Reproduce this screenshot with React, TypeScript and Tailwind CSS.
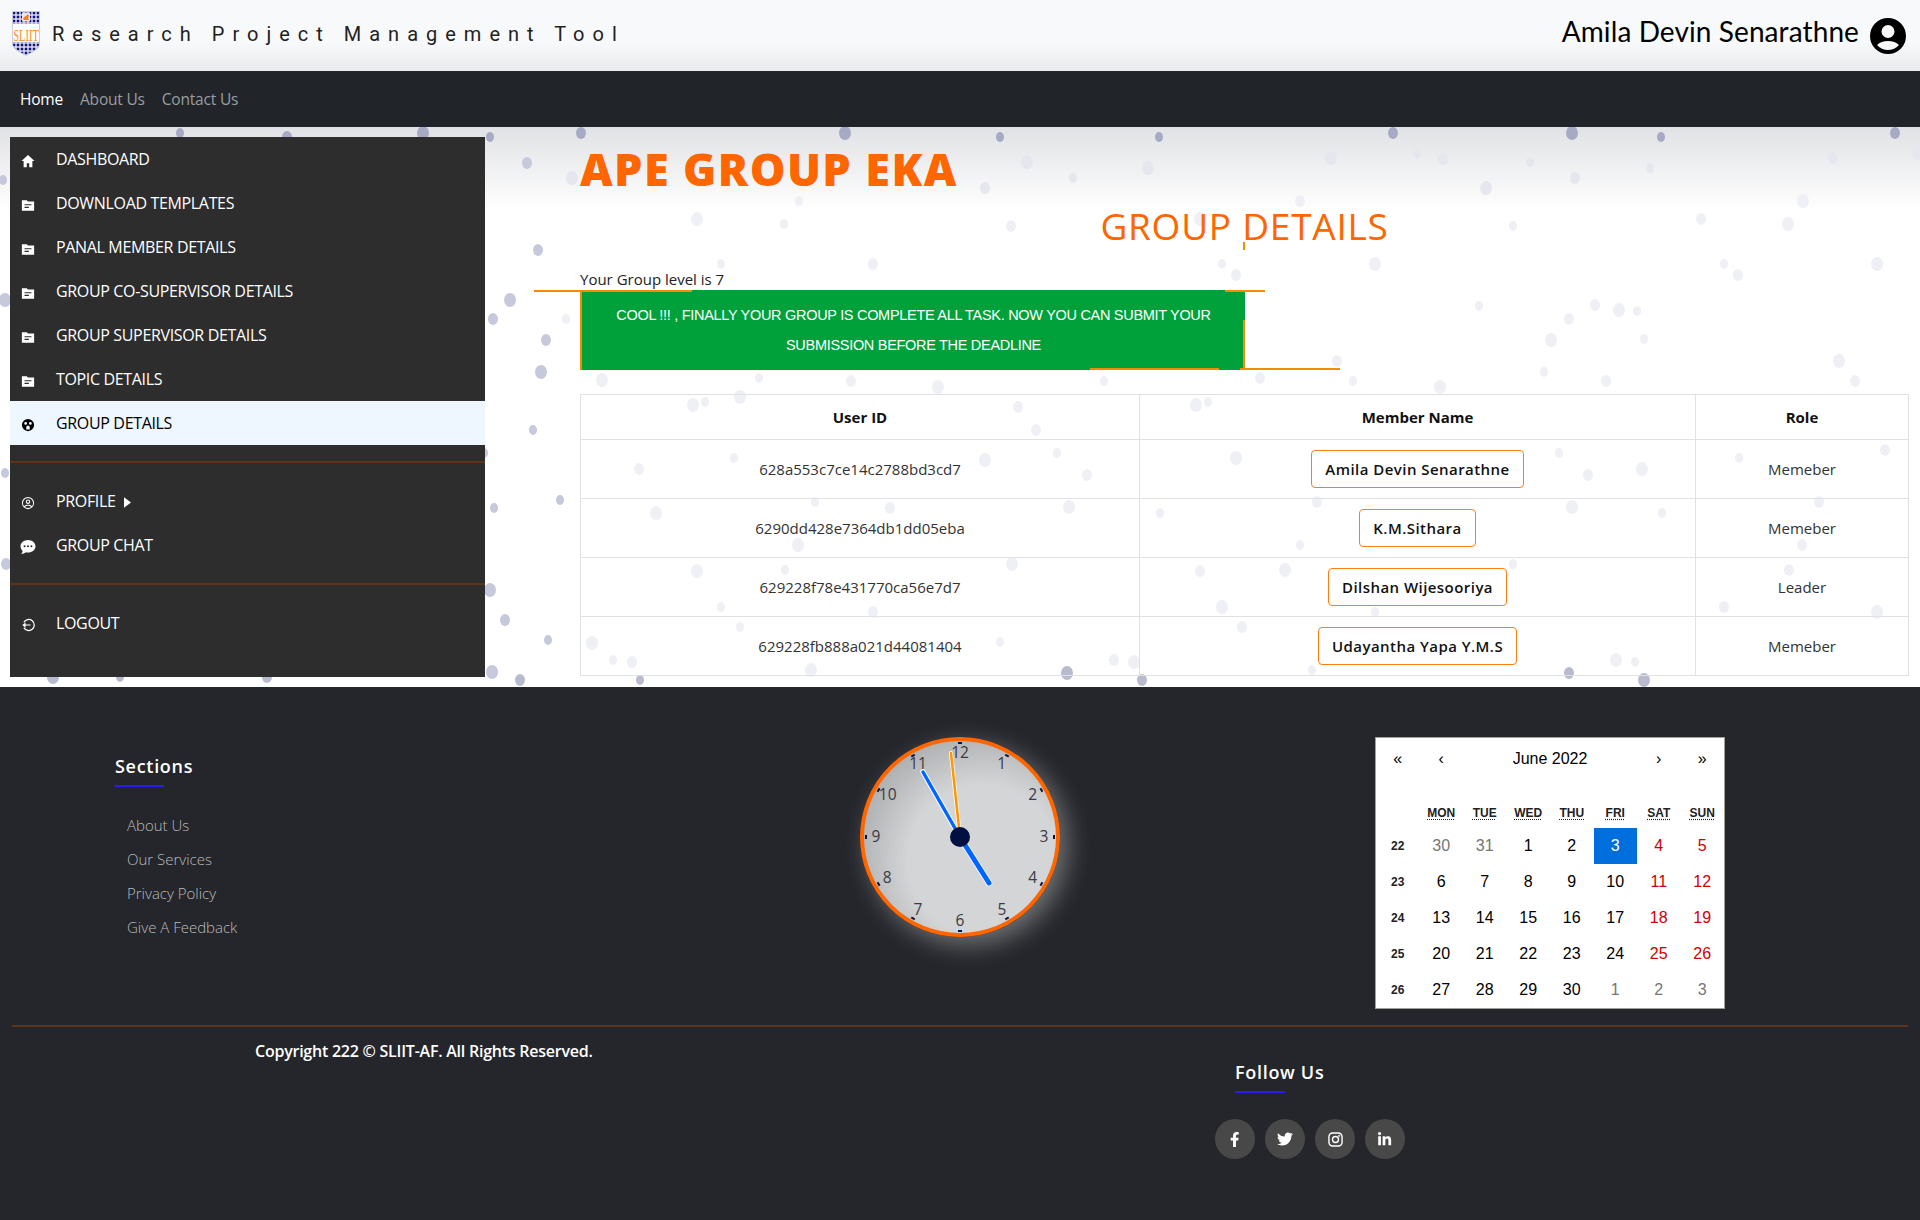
const NAV = [
  { label: "DASHBOARD", icon: "home" },
  { label: "DOWNLOAD TEMPLATES", icon: "file" },
  { label: "PANAL MEMBER DETAILS", icon: "file" },
  { label: "GROUP CO-SUPERVISOR DETAILS", icon: "file" },
  { label: "GROUP SUPERVISOR DETAILS", icon: "file" },
  { label: "TOPIC DETAILS", icon: "file" },
]

const MEMBERS = [
  { id: "628a553c7ce14c2788bd3cd7", name: "Amila Devin Senarathne", role: "Memeber" },
  { id: "6290dd428e7364db1dd05eba", name: "K.M.Sithara", role: "Memeber" },
  { id: "629228f78e431770ca56e7d7", name: "Dilshan Wijesooriya", role: "Leader" },
  { id: "629228fb888a021d44081404", name: "Udayantha Yapa Y.M.S", role: "Memeber" },
]

// week no, then days: [label, kind]  m = muted, w = weekend, s = selected
const WEEKS: [number, [number, string][]][] = [
  [22, [[30, "m"], [31, "m"], [1, ""], [2, ""], [3, "s"], [4, "w"], [5, "w"]]],
  [23, [[6, ""], [7, ""], [8, ""], [9, ""], [10, ""], [11, "w"], [12, "w"]]],
  [24, [[13, ""], [14, ""], [15, ""], [16, ""], [17, ""], [18, "w"], [19, "w"]]],
  [25, [[20, ""], [21, ""], [22, ""], [23, ""], [24, ""], [25, "w"], [26, "w"]]],
  [26, [[27, ""], [28, ""], [29, ""], [30, ""], [1, "m"], [2, "m"], [3, "m"]]],
]

// page coordinates of the rain drops in the wallpaper
const DROPS = [
  [1159, 137], [1393, 133], [1572, 133], [1661, 137], [1895, 133], [1918, 153], [1417, 154], [1443, 159], [1331, 158], [1530, 162],
  [1575, 178], [1486, 188], [1650, 168], [1833, 158], [1803, 201], [1513, 226], [1701, 219], [1788, 224], [1222, 264], [1236, 275],
  [1375, 264], [1724, 264], [1738, 275], [1877, 264], [1479, 306], [1595, 305], [1619, 310], [1637, 311], [1569, 319], [1551, 340],
  [1644, 339], [1337, 361], [1839, 361], [1544, 372], [1855, 381], [1440, 387], [1353, 381], [1606, 381], [1027, 162], [1073, 178],
  [985, 188], [1148, 168], [799, 201], [1300, 201], [697, 219], [784, 224], [1011, 226], [1200, 219], [721, 264], [873, 264],
  [602, 380], [759, 378], [851, 381], [938, 387], [1104, 381], [1260, 378], [693, 405], [705, 402], [1018, 407], [1196, 405],
  [1208, 402], [1036, 430], [740, 397], [734, 458], [639, 469], [985, 460], [1057, 453], [1087, 475], [1236, 458], [1559, 453],
  [1588, 475], [1642, 469], [1739, 458], [1885, 450], [656, 513], [815, 502], [890, 508], [1069, 507], [1160, 513], [1317, 502],
  [1572, 507], [1662, 513], [1819, 502], [798, 545], [1300, 545], [1802, 545], [697, 571], [785, 570], [1200, 571], [1285, 570],
  [1513, 564], [1789, 570], [1012, 564], [721, 607], [873, 612], [1222, 607], [1375, 612], [1724, 607], [1877, 612], [740, 627],
  [1242, 627], [592, 643], [613, 660], [632, 662], [811, 670], [1000, 642], [1114, 660], [1134, 662], [1312, 670], [1502, 642],
  [1616, 660], [1635, 662], [1569, 673], [1067, 673], [640, 680], [1142, 680], [1644, 680], [180, 133], [287, 137], [423, 133],
  [490, 137], [581, 133], [845, 133], [1000, 137], [527, 163], [572, 178], [566, 319], [546, 340], [541, 372], [533, 430],
  [493, 319], [477, 341], [471, 372], [450, 407], [464, 430], [484, 453], [442, 474], [435, 482], [494, 508], [443, 564],
  [492, 672], [5, 473], [6, 564], [53, 677], [120, 677], [267, 677], [5, 300], [3, 180], [505, 620], [490, 590], [560, 500],
  [538, 250], [510, 300], [548, 640], [520, 680],
]

function dropColor(x: number, y: number) {
  if (y < 145) return "#a6aac4"
  if (y > 672) return "#b8bbcd"
  if (x < 566) return "#c6c9dc"
  if (y < 200) return "#e5e6ee"
  return "#eff0f6"
}

function Rain() {
  return (
    <svg viewBox="0 127 1920 560" className="absolute inset-0 w-[1920px] h-[560px] blur-[0.5px]">
      {DROPS.map(([x, y], i) => (
        <ellipse key={i} cx={x} cy={y} rx={4 + (i % 3)} ry={5 + (i % 3)} fill={dropColor(x, y)} />
      ))}
    </svg>
  )
}

function Icon({ name }: { name: string }) {
  const cls = "w-[14px] h-[14px] fill-current translate-y-[2px]"
  if (name === "home") {
    return (
      <svg viewBox="0 0 16 16" className={cls}>
        <path d="M8 1 .5 8H3v7h3.6v-4.4h2.8V15H13V8h2.500z" />
      </svg>
    )
  }
  if (name === "file") {
    return (
      <svg viewBox="0 0 16 16" className={cls}>
        <path fillRule="evenodd" d="M1 2.500h5.500L8 4h7v10.500H1zM4 7v1.400h8V7zm0 3v1.400h5V10z" />
      </svg>
    )
  }
  if (name === "group") {
    return (
      <svg viewBox="0 0 16 16" className={cls}>
        <path fillRule="evenodd" d="M8 1a7 7 0 1 0 0 14A7 7 0 0 0 8 1ZM5.300 4.600a1.600 1.600 0 1 1 0 3.200 1.600 1.600 0 0 1 0-3.200Zm5.400 0a1.600 1.600 0 1 1 0 3.200 1.600 1.600 0 0 1 0-3.200ZM8 8.600a2 2 0 0 1 2 2V13H6v-2.400a2 2 0 0 1 2-2Z" />
      </svg>
    )
  }
  if (name === "profile") {
    return (
      <svg viewBox="0 0 16 16" className={cls}>
        <path fillRule="evenodd" d="M8 1a7 7 0 1 0 0 14A7 7 0 0 0 8 1Zm0 1.200a5.800 5.800 0 0 1 4.500 9.400C11.400 10.500 9.800 10 8 10s-3.400.5-4.500 1.600A5.800 5.800 0 0 1 8 2.200ZM8 4a2.500 2.500 0 1 0 0 5 2.500 2.500 0 0 0 0-5Zm0 1.200a1.300 1.300 0 1 1 0 2.600 1.300 1.300 0 0 1 0-2.600Zm0 6c1.400 0 2.700.4 3.600 1.300A5.800 5.800 0 0 1 8 13.800a5.800 5.800 0 0 1-3.600-1.300c.9-.9 2.200-1.300 3.600-1.300Z" />
      </svg>
    )
  }
  if (name === "chat") {
    return (
      <svg viewBox="0 0 16 16" className="w-4 h-4 fill-current translate-y-[2px] -translate-x-px">
        <path fillRule="evenodd" d="M8 1c4.100 0 7.500 2.800 7.500 6.300S12.100 13.600 8 13.600c-.8 0-1.500-.1-2.200-.3C4.600 14.200 3 15 1.200 15c.8-.9 1.300-1.900 1.500-3C1.300 10.800.5 9.100.5 7.300.5 3.800 3.900 1 8 1ZM4.600 6.300a1 1 0 1 0 0 2 1 1 0 0 0 0-2Zm3.400 0a1 1 0 1 0 0 2 1 1 0 0 0 0-2Zm3.400 0a1 1 0 1 0 0 2 1 1 0 0 0 0-2Z" />
      </svg>
    )
  }
  return (
    <svg viewBox="0 0 16 16" className={cls}>
      <path d="M3.300 5A6.300 6.300 0 1 1 3.300 11" fill="none" stroke="currentColor" strokeWidth="1.400" />
      <path d="M11 7.300H5.200V5L1.500 8l3.700 3V8.700H11z" />
    </svg>
  )
}

function NavRow({ label, icon, active }: { label: string; icon: string; active?: boolean }) {
  return (
    <div className={`flex items-center h-11 pl-[11px] text-[16px] tracking-[-0.34px] ${active ? "bg-[#eef6ff] text-black" : "text-white"}`}>
      <span className="w-[35px] flex"><Icon name={icon} /></span>
      <span>{label}</span>
      {label === "PROFILE" && (
        <svg viewBox="0 0 8 12" className="w-[7px] h-[11px] ml-2 fill-current translate-y-[1px]"><path d="M0 0l8 6-8 6z" /></svg>
      )}
    </div>
  )
}

function Clock() {
  const labels: [number, number, string][] = [
    [100, 16.5, "12"], [141.7, 27.5, "1"], [172.7, 58.7, "2"], [184, 100.5, "3"], [172.7, 142.3, "4"], [142, 173.7, "5"],
    [100, 184.7, "6"], [58, 173.7, "7"], [27.3, 142.3, "8"], [16, 100.5, "9"], [27.7, 58.7, "10"], [58, 27.5, "11"],
  ]
  return (
    <div className="w-[200px] h-[200px] rounded-full shadow-[8px_8px_25px_rgba(255,255,255,0.35)]">
      <svg viewBox="0 0 200 200" className="w-[200px] h-[200px]">
        <defs>
          <radialGradient id="face" cx="62%" cy="62%" r="70%">
            <stop offset="0.55" stopColor="#d3d5d6" />
            <stop offset="1" stopColor="#a9abac" />
          </radialGradient>
        </defs>
        <circle cx="100" cy="100" r="98" fill="url(#face)" stroke="#ff6600" strokeWidth="4" />
        {labels.map(([, , t], i) => {
          const a = (i * 30 * Math.PI) / 180
          const tx = 100 + Math.sin(a) * 94
          const ty = 100 - Math.cos(a) * 94
          return (
            <rect
              key={`tick${t}`}
              x={tx - 2}
              y={ty - 1}
              width="4"
              height="2"
              fill="#0b1440"
              transform={`rotate(${i * 30} ${tx} ${ty})`}
            />
          )
        })}
        {labels.map(([x, y, t]) => (
          <text
            key={t}
            x={x}
            y={y}
            fontSize="15.5"
            textAnchor="middle"
            dominantBaseline="middle"
            fill="#3a3a44"
            fontFamily="'Open Sans', sans-serif"
          >
            {t}
          </text>
        ))}
        <line x1="100" y1="100" x2="63" y2="35" stroke="#fff" strokeWidth="5.5" strokeLinecap="round" />
        <line x1="100" y1="100" x2="63" y2="35" stroke="#0066ff" strokeWidth="3.5" strokeLinecap="round" />
        <line x1="100" y1="100" x2="129" y2="146" stroke="#fff" strokeWidth="6.5" strokeLinecap="round" />
        <line x1="100" y1="100" x2="129" y2="146" stroke="#0066ff" strokeWidth="5" strokeLinecap="round" />
        <line x1="100" y1="100" x2="91" y2="16" stroke="#fff" strokeWidth="4" strokeLinecap="round" />
        <line x1="100" y1="100" x2="91" y2="16" stroke="#ff9500" strokeWidth="2.5" strokeLinecap="round" />
        <circle cx="100" cy="100" r="10" fill="#001040" />
      </svg>
    </div>
  )
}

function Calendar() {
  return (
    <div className="w-[350px] h-[272px] bg-white border border-[#a0a096] font-['Liberation_Sans',sans-serif] text-[16px] text-black">
      <div className="grid grid-cols-8 h-[42px] items-center text-center">
        <span>«</span>
        <span>‹</span>
        <span className="col-span-4">June 2022</span>
        <span>›</span>
        <span>»</span>
      </div>
      <div className="grid grid-cols-8 text-center text-[12px] font-bold text-[#222] h-[31px] mt-[17px] items-center">
        <span />
        {["MON", "TUE", "WED", "THU", "FRI", "SAT", "SUN"].map((d) => (
          <span key={d}><span className="underline decoration-dotted underline-offset-2">{d}</span></span>
        ))}
      </div>
      {WEEKS.map(([wk, days]) => (
        <div key={wk} className="grid grid-cols-8 text-center h-9 items-center">
          <span className="text-[12px] font-bold text-[#222]">{wk}</span>
          {days.map(([d, kind], i) => (
            <span
              key={i}
              className={`h-9 flex items-center justify-center ${
                kind === "s" ? "bg-[#006edc] text-white" : kind === "w" ? "text-[#d10000]" : kind === "m" ? "text-[#757575]" : ""
              }`}
            >
              {d}
            </span>
          ))}
        </div>
      ))}
    </div>
  )
}

function Logo() {
  return (
    <svg viewBox="0 0 28 45" className="w-[28px] h-[45px] -mt-1">
      <defs>
        <pattern id="grid" width="4" height="4" patternUnits="userSpaceOnUse">
          <rect width="4" height="4" fill="#e4e6f0" />
          <rect x="0.7" y="0.7" width="2.6" height="2.6" fill="#14147a" />
        </pattern>
      </defs>
      <path d="M0 0h28v33c0 5-8 9-14 12C8 42 0 38 0 33z" fill="#c9cde0" />
      <path d="M1 1h26v32c0 4-7 8-13 11C8 41 1 37 1 33z" fill="url(#grid)" />
      <rect x="10" y="1.5" width="8" height="9" fill="#e4e6f0" />
      <path d="M11 9l1-3 2-1 2-2 1 2-1 2 1 2z" fill="#ff7a1a" />
      <rect x="1" y="13" width="26" height="18" fill="#ffffff" />
      <text transform="scale(1 1.6)" x="14" y="18.5" fontSize="10.5" textAnchor="middle" fill="#ff8a1e" fontFamily="'Liberation Serif', serif">SLIIT</text>
    </svg>
  )
}

function Social({ children }: { children: React.ReactNode }) {
  return <div className="w-10 h-10 rounded-full bg-[#484848] text-white flex items-center justify-center">{children}</div>
}

export default function App() {
  return (
    <div className="w-[1920px] h-[1220px] overflow-hidden font-['Open_Sans',sans-serif] bg-white">
      {/* top header */}
      <header className="h-[71px] bg-gradient-to-b from-[#f8f9fa] from-60% to-[#e9eaec] flex items-center justify-between pl-3 pr-[14px]">
        <div className="flex items-center gap-3">
          <Logo />
          <span className="font-['Roboto',sans-serif] text-[20px] tracking-[8px] text-[#222] -mt-1 whitespace-nowrap">Research Project Management Tool</span>
        </div>
        <div className="flex items-center gap-[11px]">
          <span className="font-['Lato',sans-serif] text-[28px] tracking-[0.1px] text-black -mt-[9px]">Amila Devin Senarathne</span>
          <svg viewBox="0 0 36 36" className="w-9 h-9">
            <path fillRule="evenodd" d="M18 0a18 18 0 1 1 0 36 18 18 0 0 1 0-36Zm0 7a6.500 6.500 0 1 0 0 13 6.500 6.500 0 0 0 0-13Zm0 16c-4.500 0-8.500 1.500-11 4a14.500 14.500 0 0 0 22 0c-2.500-2.500-6.500-4-11-4Z" />
          </svg>
        </div>
      </header>

      {/* nav bar */}
      <nav className="h-[56px] pt-[2px] bg-[#212529] flex items-center pl-5 gap-[17px] text-[15.5px] tracking-[-0.2px] text-[#9a9da0]">
        <span className="text-white">Home</span>
        <span>About Us</span>
        <span>Contact Us</span>
      </nav>

      {/* main */}
      <main className="h-[560px] pt-[10px] pl-[10px] flex relative overflow-hidden bg-gradient-to-b from-[#e1e2e5] via-[#ffffff] via-15% to-[#ffffff]">
        <Rain />
        <aside className="relative w-[475px] h-[540px] bg-[#2d2d2d] text-white shrink-0">
          {NAV.map((n) => <NavRow key={n.label} {...n} />)}
          <NavRow label="GROUP DETAILS" icon="group" active />
          <div className="h-[2px] bg-[#5e3419] mt-4 mb-4" />
          <NavRow label="PROFILE" icon="profile" />
          <NavRow label="GROUP CHAT" icon="chat" />
          <div className="h-[2px] bg-[#5e3419] mt-4 mb-4" />
          <NavRow label="LOGOUT" icon="logout" />
        </aside>

        <section className="relative ml-[95px] flex-1 pr-[11px] min-w-0">
          <h1 className="font-extrabold text-[45px] leading-[50px] text-[#ff6600] tracking-[1.4px] mt-[7px]">APE GROUP EKA</h1>
          <h2 className="text-center text-[37px] leading-[46px] tracking-[0.75px] text-[#ff6600] mt-[9px]">GROUP DETAILS</h2>
          <p className="text-[15px] leading-5 text-[#222] mt-[20px]">Your Group level is 7</p>
          <div className="relative w-[665px] h-[80px] mt-[1px] bg-[#00a13b] border-l-[2px] border-[#f28c00] text-white font-['Liberation_Sans',sans-serif] text-[14.5px] tracking-[-0.3px] leading-[30px] text-center pt-[10px] px-5">
            COOL !!! , FINALLY YOUR GROUP IS COMPLETE ALL TASK. NOW YOU CAN SUBMIT YOUR SUBMISSION BEFORE THE DEADLINE
            <span className="absolute left-[-48px] top-0 h-[2px] w-[158px] bg-[#f28c00]" />
            <span className="absolute left-[643px] top-0 h-[2px] w-[40px] bg-[#f28c00]" />
            <span className="absolute right-0 top-[30px] h-[50px] w-[2px] bg-[#f28c00]" />
            <span className="absolute left-[508px] bottom-0 h-[2px] w-[129px] bg-[#f28c00]" />
            <span className="absolute left-[658px] bottom-0 h-[2px] w-[100px] bg-[#f28c00]" />
            <span className="absolute left-[661px] top-[-48px] h-[8px] w-[2px] bg-[#f28c00]" />
          </div>

          <table className="w-[1329px] mt-[24px] border-collapse text-[15px] text-[#333] table-fixed">
            <thead>
              <tr className="h-[45px]">
                <th className="w-[559px] border border-[#dee2e6] font-bold text-[#111]">User ID</th>
                <th className="w-[556px] border border-[#dee2e6] font-bold text-[#111]">Member Name</th>
                <th className="border border-[#dee2e6] font-bold text-[#111]">Role</th>
              </tr>
            </thead>
            <tbody>
              {MEMBERS.map((m) => (
                <tr key={m.id} className="h-[59px] text-center">
                  <td className="border border-[#dee2e6]">{m.id}</td>
                  <td className="border border-[#dee2e6]">
                    <span className="inline-block h-[38px] leading-[36px] px-[13px] border border-[#fd7e14] rounded-[4px] bg-white text-[#111] font-semibold tracking-[0.45px]">{m.name}</span>
                  </td>
                  <td className="border border-[#dee2e6]">{m.role}</td>
                </tr>
              ))}
            </tbody>
          </table>
        </section>
      </main>

      {/* footer */}
      <footer className="h-[533px] bg-[#24262b] text-white">
        <div className="h-[338px] flex">
          <div className="w-[860px] pl-[115px] pt-[67px]">
            <h4 className="text-[18px] font-semibold tracking-[0.7px] leading-6">Sections</h4>
            <div className="w-[49px] h-[2px] bg-[#2a1cf0] mt-[7px]" />
            <ul className="mt-[21px] ml-3 text-[15px] font-light text-[#bbbbbb]">
              <li className="h-[34px] leading-[34px]">About Us</li>
              <li className="h-[34px] leading-[34px]">Our Services</li>
              <li className="h-[34px] leading-[34px]">Privacy Policy</li>
              <li className="h-[34px] leading-[34px]">Give A Feedback</li>
            </ul>
          </div>
          <div className="pt-[50px]"><Clock /></div>
          <div className="ml-[315px] pt-[50px]"><Calendar /></div>
        </div>
        <div className="h-[2px] mx-3 bg-[#5e3419]" />
        <div className="flex">
          <p className="pl-[255px] w-[1200px] pt-[12px] text-[16px] font-semibold tracking-[-0.24px]">Copyright 222 © SLIIT-AF. All Rights Reserved.</p>
          <div className="pt-[33px] pl-[15px]">
            <h4 className="text-[18px] font-semibold tracking-[0.7px] leading-6 ml-[20px]">Follow Us</h4>
            <div className="w-[50px] h-[2px] bg-[#2a1cf0] mt-[7px] ml-[20px]" />
            <div className="flex gap-[10px] mt-[26px]">
              <Social>
                <svg viewBox="0 0 320 512" className="h-[15px] fill-current"><path d="M279 288l14-93h-89v-60c0-25 12-50 52-50h41V6s-37-6-72-6c-73 0-121 44-121 125v70H23v93h81v224h100V288z" /></svg>
              </Social>
              <Social>
                <svg viewBox="0 0 512 512" className="h-[16px] fill-current"><path d="M459 152c0 5 0 9 0 14 0 139-106 299-299 299-59 0-115-17-161-47 8 1 16 1 25 1 49 0 94-17 130-45-46-1-85-31-98-73 6 1 13 2 20 2 9 0 19-1 28-4-48-10-84-52-84-103v-1c14 8 30 13 47 13-28-19-47-51-47-87 0-19 5-37 14-53 52 64 129 105 216 110-2-8-3-16-3-24 0-58 47-105 105-105 30 0 58 13 77 33 24-5 47-14 67-26-8 24-25 45-46 58 21-2 42-8 61-16-14 21-32 40-52 55z" /></svg>
              </Social>
              <Social>
                <svg viewBox="0 0 16 16" className="h-[15px] w-[15px] fill-none stroke-current stroke-[1.5]"><rect x="1" y="1" width="14" height="14" rx="4" /><circle cx="8" cy="8" r="3.2" /><circle cx="12" cy="4" r="0.4" /></svg>
              </Social>
              <Social>
                <svg viewBox="0 0 448 512" className="h-[15px] fill-current"><path d="M100 448H7V149h93zM54 108C24 108 0 83 0 54a54 54 0 0 1 108 0c0 29-24 54-54 54zm394 340h-93V302c0-35-1-79-48-79-48 0-56 38-56 77v148h-93V149h89v41h1c12-24 43-48 88-48 94 0 112 62 112 142z" /></svg>
              </Social>
            </div>
          </div>
        </div>
      </footer>
    </div>
  )
}
